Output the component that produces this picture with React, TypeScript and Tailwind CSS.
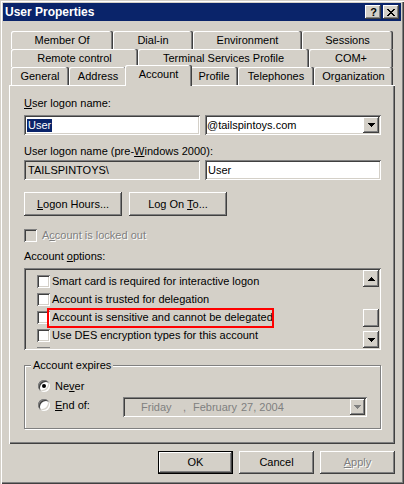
import React from "react";

const RAISED =
  "bg-[#d4d0c8] shadow-[inset_-1px_-1px_0_#404040,inset_1px_1px_0_#ffffff,inset_-2px_-2px_0_#808080]";
const SUNKEN =
  "shadow-[inset_1px_1px_0_#808080,inset_-1px_-1px_0_#ffffff,inset_2px_2px_0_#404040,inset_-2px_-2px_0_#d4d0c8]";
const TAB =
  "h-[18px] bg-[#d4d0c8] rounded-t-[2px] shadow-[inset_-1px_0_0_#404040,inset_-2px_0_0_#808080,inset_1px_1px_0_#ffffff] flex items-center justify-center pt-[1px] shrink-0";
const DIS = "text-[#808080] [text-shadow:1px_1px_0_#ffffff]";

function DownArrow({ color = "#000" }: { color?: string }) {
  return (
    <svg width="7" height="4" viewBox="0 0 7 4">
      <path d="M0 0h7v1H0zM1 1h5v1H1zM2 2h3v1H2zM3 3h1v1H3z" fill={color} />
    </svg>
  );
}
function UpArrow() {
  return (
    <svg width="7" height="4" viewBox="0 0 7 4">
      <path d="M3 0h1v1H3zM2 1h3v1H2zM1 2h5v1H1zM0 3h7v1H0z" fill="#000" />
    </svg>
  );
}

function Check({ disabled = false }: { disabled?: boolean }) {
  return (
    <div
      className={`w-[13px] h-[13px] shrink-0 ${disabled ? "bg-[#d4d0c8]" : "bg-white"} ${SUNKEN}`}
    />
  );
}

function Radio({ checked = false }: { checked?: boolean }) {
  return (
    <div
      className={`w-[12px] h-[12px] shrink-0 rounded-full bg-white flex items-center justify-center ${SUNKEN}`}
    >
      {checked && <div className="w-[4px] h-[4px] rounded-full bg-black" />}
    </div>
  );
}

function ListRow({ children }: { children?: React.ReactNode }) {
  return (
    <div className="h-[18px] flex items-center gap-[2px] shrink-0 whitespace-nowrap">
      <Check />
      {children && <span>{children}</span>}
    </div>
  );
}

export default function App() {
  return (
    <div className="w-[404px] h-[484px] bg-[#d4d0c8] p-[3px] shadow-[inset_1px_1px_0_#d4d0c8,inset_2px_2px_0_#ffffff,inset_-1px_-1px_0_#404040,inset_-2px_-2px_0_#808080] flex flex-col text-[11px] leading-[13px] text-black font-['Liberation_Sans',Arial,sans-serif] overflow-hidden select-none">
      {/* Title bar */}
      <div className="h-[18px] bg-[#0a246a] flex items-center pl-[2px] pr-[2px] shrink-0">
        <span className="flex-1 text-white font-bold text-[12px] leading-[18px]">User Properties</span>
        <div className="flex gap-[2px]">
          <div className={`w-[16px] h-[14px] flex items-center justify-center ${RAISED}`}>
            <span className="font-bold text-[11px] leading-[11px] pl-[1px]">?</span>
          </div>
          <div className={`w-[16px] h-[14px] flex items-center justify-center ${RAISED}`}>
            <svg width="8" height="7" viewBox="0 0 8 7">
              <path
                d="M0 0h2v1H0zM6 0h2v1H6zM1 1h2v1H1zM5 1h2v1H5zM2 2h4v1H2zM3 3h2v1H3zM2 4h4v1H2zM1 5h2v1H1zM5 5h2v1H5zM0 6h2v1H0zM6 6h2v1H6z"
                fill="#000"
              />
            </svg>
          </div>
        </div>
      </div>

      {/* Tabs + panel */}
      <div className="ml-[6px] mt-[10px] flex flex-col">
        <div className="pl-[2px] flex flex-col">
          <div className="flex">
            <div className={`${TAB} w-[102px]`}>Member Of</div>
            <div className={`${TAB} w-[80px]`}>Dial-in</div>
            <div className={`${TAB} w-[109px]`}>Environment</div>
            <div className={`${TAB} w-[91px]`}>Sessions</div>
          </div>
          <div className="flex">
            <div className={`${TAB} w-[127px]`}>Remote control</div>
            <div className={`${TAB} w-[171px]`}>Terminal Services Profile</div>
            <div className={`${TAB} w-[84px]`}>COM+</div>
          </div>
          <div className="flex h-[18px]">
            <div className={`${TAB} w-[58px]`}>General</div>
            <div className={`${TAB} w-[58px]`}>Address</div>
            <div className="relative z-10 -mx-[2px] -mt-[2px] -mb-[1px] w-[67px] h-[21px] bg-[#d4d0c8] rounded-t-[2px] shadow-[inset_-1px_0_0_#404040,inset_-2px_0_0_#808080,inset_1px_1px_0_#ffffff] flex justify-center pt-[3px] shrink-0">
              Account
            </div>
            <div className={`${TAB} w-[48px]`}>Profile</div>
            <div className={`${TAB} w-[76px]`}>Telephones</div>
            <div className={`${TAB} w-[79px]`}>Organization</div>
          </div>
        </div>

        <div className="h-[359px] w-[386px] bg-[#d4d0c8] shadow-[inset_1px_1px_0_#ffffff,inset_-1px_-1px_0_#404040,inset_-2px_-2px_0_#808080] pt-[12px] pl-[15px] pr-[14px] flex flex-col">
          <div className="h-[13px]">
            <u>U</u>ser logon name:
          </div>
          <div className="mt-[5px] flex gap-[5px]">
            <div className={`w-[176px] h-[20px] bg-white flex items-center pl-[3px] ${SUNKEN}`}>
              <span className="bg-[#0a246a] text-white h-[13px] px-[1px]">User</span>
            </div>
            <div className={`w-[176px] h-[20px] bg-white flex items-center pl-[2px] pr-[2px] ${SUNKEN}`}>
              <span className="flex-1">@tailspintoys.com</span>
              <div className={`w-[16px] h-[16px] flex items-center justify-center ${RAISED}`}>
                <DownArrow />
              </div>
            </div>
          </div>

          <div className="mt-[10px] h-[13px]">
            User logon name (pre-<u>W</u>indows 2000):
          </div>
          <div className="mt-[2px] flex gap-[5px]">
            <div className={`w-[176px] h-[20px] bg-[#d4d0c8] flex items-center pl-[4px] ${SUNKEN}`}>
              TAILSPINTOYS\
            </div>
            <div className={`w-[176px] h-[20px] bg-white flex items-center pl-[3px] ${SUNKEN}`}>
              User
            </div>
          </div>

          <div className="mt-[12px] flex gap-[7px]">
            <div className={`w-[98px] h-[24px] flex items-center justify-center ${RAISED}`}>
              <span>
                <u>L</u>ogon Hours...
              </span>
            </div>
            <div className={`w-[98px] h-[24px] flex items-center justify-center ${RAISED}`}>
              <span>
                Log On <u>T</u>o...
              </span>
            </div>
          </div>

          <div className="mt-[13px] h-[13px] flex items-center gap-[5px]">
            <Check disabled />
            <span className={DIS}>
              A<u>c</u>count is locked out
            </span>
          </div>

          <div className="mt-[8px] h-[13px]">
            Account <u>o</u>ptions:
          </div>

          <div className={`relative mt-[5px] h-[82px] p-[2px] flex ${SUNKEN}`}>
            <div className="flex-1 overflow-hidden pt-[2px] pl-[11px] flex flex-col">
              <ListRow>Smart card is required for interactive logon</ListRow>
              <ListRow>Account is trusted for delegation</ListRow>
              <ListRow>Account is sensitive and cannot be delegated</ListRow>
              <ListRow>Use DES encryption types for this account</ListRow>
              <ListRow />
            </div>
            <div className="w-[16px] flex flex-col">
              <div className={`h-[17px] flex items-center justify-center ${RAISED}`}>
                <UpArrow />
              </div>
              <div className="h-[22px]" />
              <div className={`h-[18px] ${RAISED}`} />
              <div className="h-[4px]" />
              <div className={`h-[17px] flex items-center justify-center ${RAISED}`}>
                <DownArrow />
              </div>
            </div>
            <div className="absolute left-[23px] top-[40px] w-[227px] h-[20px] border-2 border-[#ff0000]" />
          </div>

          <div className="relative mt-[15px] h-[64px] border border-[#808080] shadow-[1px_1px_0_#ffffff,inset_1px_1px_0_#ffffff] pl-[13px] pt-[14px] flex flex-col">
            <span className="absolute left-[6px] -top-[7px] bg-[#d4d0c8] px-[2px] leading-[13px]">
              Account expires
            </span>
            <div className="h-[12px] flex items-center gap-[5px]">
              <Radio checked />
              <span>
                Ne<u>v</u>er
              </span>
            </div>
            <div className="mt-[5px] h-[20px] flex">
              <div className="w-[85px] h-[14px] mt-[1px] flex items-center gap-[5px]">
                <Radio />
                <span>
                  <u>E</u>nd of:
                </span>
              </div>
              <div className={`w-[244px] h-[20px] bg-[#d4d0c8] flex items-center pl-[18px] pr-[2px] text-[#808080] whitespace-nowrap ${SUNKEN}`}>
                <span className="w-[42px]">Friday</span>
                <span className="w-[10px]">,</span>
                <span className="w-[48px]">February</span>
                <span className="flex-1">27, 2004</span>
                <div className={`w-[15px] h-[16px] flex items-center justify-center ${RAISED}`}>
                  <DownArrow color="#808080" />
                </div>
              </div>
            </div>
          </div>
        </div>
      </div>

      {/* Bottom buttons */}
      <div className="mt-[7px] flex justify-end gap-[6px] pr-[6px]">
        <div className="w-[75px] h-[23px] bg-[#d4d0c8] shadow-[inset_0_0_0_1px_#000000,inset_-2px_-2px_0_#404040,inset_2px_2px_0_#ffffff,inset_-3px_-3px_0_#808080] flex items-center justify-center">
          OK
        </div>
        <div className={`w-[75px] h-[23px] flex items-center justify-center ${RAISED}`}>Cancel</div>
        <div className={`w-[75px] h-[23px] flex items-center justify-center ${RAISED}`}>
          <span className={DIS}>
            <u>A</u>pply
          </span>
        </div>
      </div>
    </div>
  );
}
